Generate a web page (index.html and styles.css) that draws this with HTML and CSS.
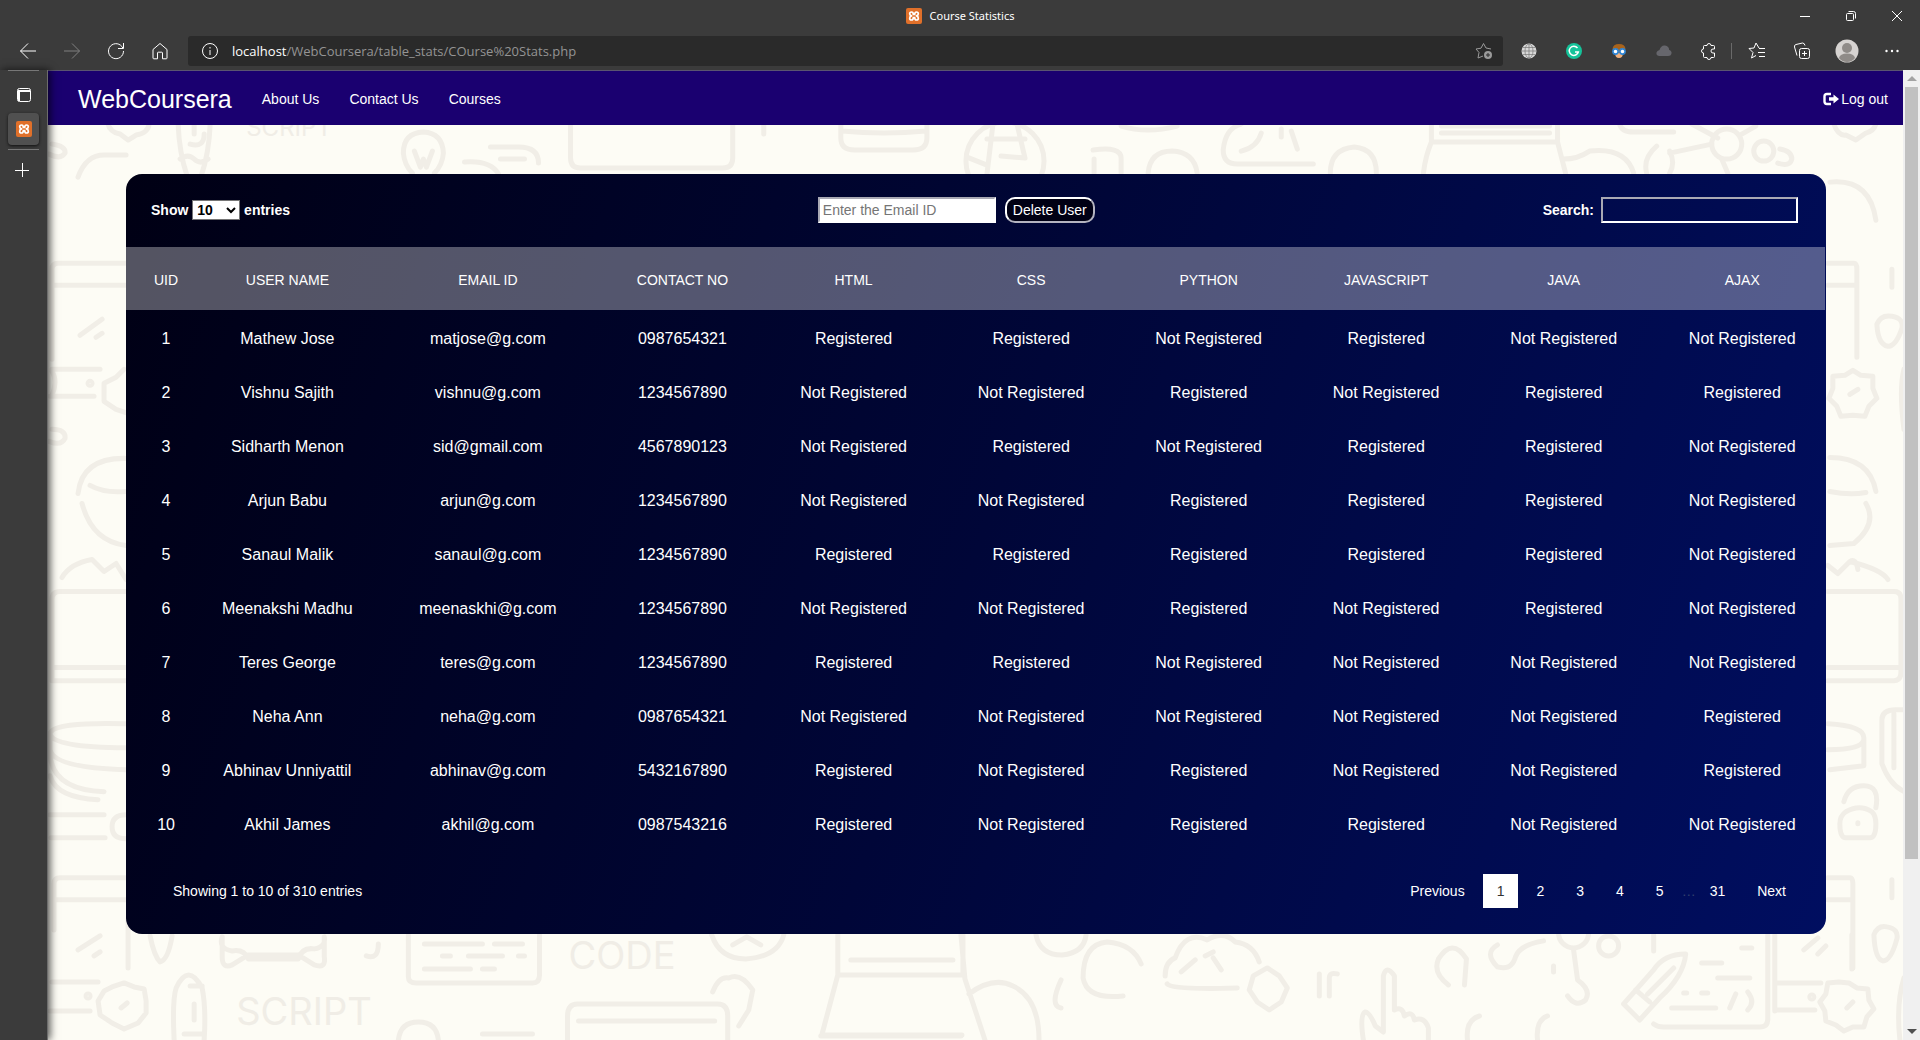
FILE: index.html
```html
<!DOCTYPE html>
<html lang="en">
<head>
<meta charset="utf-8">
<meta name="viewport" content="width=device-width, initial-scale=1">
<title>Course Statistics</title>
<link rel="stylesheet" href="styles.css">
</head>
<body>
<svg class="defs" aria-hidden="true">
  <symbol id="xampp" viewBox="0 0 16 16">
    <rect width="16" height="16" rx="2" fill="#e0702a"/>
    <path d="M5.600 7.900Q3.700 7.600 3.700 5.800 3.700 4 5.500 4 7.300 4 7.300 6.500h1.400Q8.700 4 10.500 4q1.800 0 1.800 1.800 0 1.800-1.900 2.100 1.900.4 1.900 2.300 0 1.800-1.800 1.800-1.800 0-1.800-2.500H7.300q0 2.500-1.800 2.500-1.800 0-1.800-1.800 0-1.900 1.900-2.300Z" fill="none" stroke="#fff" stroke-width="1.700" stroke-linejoin="round"/>
  </symbol>
</svg>

<header class="titlebar">
  <div class="window-title"><svg class="favicon"><use href="#xampp"/></svg><span>Course Statistics</span></div>
  <div class="window-buttons">
    <button aria-label="Minimize"><svg width="12" height="12"><path d="M1 6.500h10"/></svg></button>
    <button aria-label="Restore"><svg width="12" height="12"><rect x="1.500" y="3.500" width="7" height="7" rx="1"/><path d="M3.500 1.500h5q2 0 2 2v5"/></svg></button>
    <button aria-label="Close"><svg width="12" height="12"><path d="M1 1l10 10M11 1L1 11"/></svg></button>
  </div>
</header>

<div class="toolbar">
  <div class="nav-buttons">
    <button aria-label="Back"><svg width="18" height="18"><path d="M17 9H1.500M9 1.500L1.500 9 9 16.500"/></svg></button>
    <button aria-label="Forward" class="is-dim"><svg width="18" height="18"><path d="M1 9h15.500M9 1.500L16.500 9 9 16.500"/></svg></button>
    <button aria-label="Refresh"><svg width="18" height="18"><path d="M15.800 6A7.500 7.500 0 1 0 16.500 9M16.500 1v5.500H11"/></svg></button>
    <button aria-label="Home"><svg width="18" height="18"><path d="M2 7.500L9 1.500l7 6V16q0 .8-.8.8H11.500V11q0-.8-.8-.8H7.300q-.8 0-.8.8v5.800H2.800Q2 16.800 2 16Z"/></svg></button>
  </div>
  <div class="address">
    <svg class="info" width="18" height="18"><circle cx="9" cy="9" r="7.500"/><path d="M9 8v5M9 5v1.500"/></svg>
    <span class="url"><b>localhost</b>/WebCoursera/table_stats/COurse%20Stats.php</span>
    <button aria-label="Add to favorites"><svg width="18" height="18"><path d="M8 14l-5 2 1-5.500L1 7l5-.8L8.500 1.500 11 6l5 1"/><circle cx="13" cy="13" r="4" class="fill"/><path d="M13 11v4M11 13h4" stroke="#2a2a2a"/></svg></button>
  </div>
  <div class="tools">
    <button aria-label="Web extension"><svg width="16" height="16"><circle cx="8" cy="8" r="7.500" fill="#d8d8d8" stroke="none"/><path d="M8 1v14M1 8h14M2 4.500h12M2 11.500h12" stroke="#777" stroke-width=".7"/><ellipse cx="8" cy="8" rx="4" ry="7" stroke="#777" stroke-width=".7"/></svg></button>
    <button aria-label="Grammarly"><svg width="16" height="16"><circle cx="8" cy="8" r="8" fill="#15c39a" stroke="none"/><path d="M11.500 5A4.600 4.600 0 1 0 12.300 9H9" stroke-width="1.500"/></svg></button>
    <button aria-label="Owl extension"><svg width="16" height="16"><path d="M1.500 6Q2 1 8 1t6.500 5L12 10H4Z" fill="#a8631c" stroke="none"/><path d="M4 10h8q0 5-4 5t-4-5Z" fill="#f1b07c" stroke="none"/><circle cx="4.500" cy="8.500" r="2.600" fill="#fff" stroke="#2f86d6" stroke-width="1.600"/><circle cx="11.500" cy="8.500" r="2.600" fill="#fff" stroke="#2f86d6" stroke-width="1.600"/></svg></button>
    <button aria-label="Cloud extension"><svg width="16" height="16"><path d="M3 13q-3-.5-2.500-3.500Q1 7.500 3.500 7 5 2 9 2.500q4 .5 4.200 4.500Q16 8 15.500 10.500 15 13 12 13Z" fill="#66666c" stroke="none"/></svg></button>
    <button aria-label="Extensions"><svg width="18" height="18"><path d="M3.500 4.500q0-1 1-1H7a2 2 0 0 1 4 0h2.500q1 0 1 1V7h-1.500a2 2 0 0 0 0 4h1.500v3.500q0 1-1 1H11a2 2 0 0 1-4 0H4.500q-1 0-1-1V11a2 2 0 0 1 0-4Z"/></svg></button>
    <span class="separator"></span>
    <button aria-label="Favorites"><svg width="18" height="18"><path d="M11 6L8 1 6 6 1 6.500l4 4L3.500 16 8 13.500M11 6.500h6M10 10.500h7M11 14.500h6"/></svg></button>
    <button aria-label="Collections"><svg width="18" height="18"><rect x="6.500" y="6.500" width="10" height="10" rx="2"/><path d="M11.500 9v5M9 11.500h5M4 13.500L1.500 5q-.5-2 1.500-2.500L9.500 1q2 0 2.500 2.500"/></svg></button>
    <button aria-label="Profile"><svg width="24" height="24"><circle cx="12" cy="12" r="11.500" fill="#d6d3d1" stroke="none"/><circle cx="12" cy="9" r="5" fill="#8f8b88" stroke="none"/><path d="M4 19q1-4.500 8-4.500t8 4.500q-3 4-8 4t-8-4Z" fill="#8f8b88" stroke="none"/></svg></button>
    <button aria-label="Settings and more"><svg width="16" height="16"><circle cx="2.500" cy="8" r="1.200" class="fill"/><circle cx="8" cy="8" r="1.200" class="fill"/><circle cx="13.500" cy="8" r="1.200" class="fill"/></svg></button>
  </div>
</div>

<div class="workspace">
  <aside class="tabs">
    <button aria-label="Tab actions"><svg width="16" height="16"><rect x="1.500" y="1.500" width="13" height="13" rx="2"/><path d="M2 4h12M3 3v11" stroke-width="2"/></svg></button>
    <button aria-label="Course Statistics" class="is-active"><svg class="favicon"><use href="#xampp"/></svg></button>
    <hr>
    <button aria-label="New tab"><svg width="16" height="16"><path d="M1 8.500h14M8.500 1v14"/></svg></button>
  </aside>

  <div class="page">
    <svg class="doodles" viewBox="48 71 1855 969" preserveAspectRatio="xMinYMin slice" aria-hidden="true">
      <!-- strip above the card -->
      <path d="M108 125q2 8 12 10l8 6 8-5q12-2 13-11M178 125q1 28 9 52M210 125q-1 28-9 52M194 125v10M180 160q8-6 14 0t14 0M190 145q14 4 14-10"/>
      <text class="small" x="246" y="137">SCRIPT</text>
      <path d="M412 174q-8-8-9-20 0-20 20-21 19 1 20 21-1 12-9 20M414 152l6 16 3-8 3 8 6-16M490 148h28q20 0 20 16M500 160h24M464 163q26-2 34 12M570 125v34q0 10 10 10h142q10 0 10-10v-34M763 125v10"/>
      <path d="M840 125v14q0 12 14 12h58q14 0 14-12v-14M841 132q42 4 84 0"/>
      <circle cx="1004" cy="162" r="39"/>
      <path d="M992 125l-6 50M1016 125l8 34-24-2M986 140h38M966 158l20 8M1092 151q28-4 28 8v15M1093 160v14M1147 174q2-22 24-22 22 1 25 22M1120 127q26 8 56 0M1240 125q-16 4-18 26 0 14 14 14h76M1240 152q16-4 20-18M1280 130v8M1296 150l-6-18M1329 174q0-24 24-26 22 2 22 26"/>
      <path d="M1430 125v18h126v-18M1440 127h108M1440 134h108M1430 143q-6 14-8 31M1556 143l8 31M1562 160q14 0 26-8 36-4 44 22M1618 125q2 8 14 8h40M1690 125l26 14M1740 135l14-8M1668 154l42-9M1655 147q-14 12-10 27M1668 152q6 12 0 22M1720 160l6 14"/>
      <circle cx="1725" cy="145" r="15"/><circle cx="1762" cy="152" r="10"/>
      <path d="M1778 150q12 2 12 10-2 8-14 4M1832 125q4 12 12 11l10 5 10-7q8-2 10-9"/>
      <!-- left margin -->
      <path d="M52 145q14 2 13 9-4 7-16 1M78 178q8-22 26-22h22M126 264H58q-6 0-6 6v90M52 286h74M80 336l22-16M96 338l6-4M52 370h48M50 397h44M52 372q6 10 0 24M124 370l-8 8-12 6 0 18 12 8 12 4M52 430q14 0 13 9-4 8-16 3"/>
      <circle cx="90" cy="384" r="2"/>
      <path d="M78 494q4-36 48-35M82 504q10 38 44 42M90 486q14 8 36 6M62 578q8-14 30-18l12 12 12-8 10 16M52 680V600q0-8 8-8h66M54 668h72M52 681h74M126 724q-74-2-76 10 2 14 76 14M50 736v14q4 18 76 20M50 754q2 36 54 38M50 776q6 22 48 24M50 815h54M51 838h54M126 815q-14 0-14 12t14 12M54 930v-46q0-6 6-6h66M54 900h72M78 950l22-14M94 956l6-4M128 920v48M52 982h46M50 1011h40"/>
      <circle cx="88" cy="996" r="2"/>
      <path d="M124 983l10 4 10 2 2 12 0 12-8 10-14 6-12-6-12-8-2-14 6-10 8-4ZM121 1008l6-5"/>
      <!-- right margin -->
      <path d="M1828 183q40-4 46 38M1826 264h26q3 0 3 6v88M1826 286h29M1890 270v18M1875 325q4-10 15-8 12 2 10 12-6 18-14 18-10-2-11-22ZM1851 371l8 5 12 1 0 12 4 10-8 8-4 10-12-1-12 1-4-10-8-8 4-10 0-12 12-1ZM1848 395l8-5M1902 370q-5 20 0 60M1828 458q40 0 46 34M1828 492q20 4 36 1M1864 504q12 20-12 40l-24 2M1826 566l10 8 12-12q32 8 38 18M1848 562q6-4 8 8"/>
      <path d="M1826 592h66q7 0 7 7v74q0 8-7 8h-66M1826 668h70M1826 724q36 2 36 14v28l-34 4M1826 750q34 0 36-10M1880 720q0-10 14-10h9M1880 720v44q8 22 23 28M1892 714v54"/>
      <path d="M1842 802q4-16 20-16t12 22M1844 812q14-8 26 0 4 4 4 12 0 14-6 14h-24q-6 0-6-14 0-8 6-12ZM1856 823v1M1826 878h22q3 0 3 6v84M1826 900h25M1890 880v18M1872 935q4-10 13-8 12 2 10 12-6 22-14 22-8-2-9-26ZM1847 983l8 5 11 1 1 11 5 9-7 8-3 10-11 0-9 4-8-6-10-4-1-10-5-9 6-8 2-11 11-1ZM1845 1008l6-6M1902 978q-8 26-4 62"/>
      <!-- strip below the card -->
      <path d="M150 936q4 20 10 26 8-2 12-26M222 937q-4 12 10 14 12-2 16 8h50q4-12 16-10 12-2 10-12M222 937v20q0 12 10 8l16-10h50l16 10q12 4 10-8v-20M366 956q12 4 12-12M408 935v42q0 6 8 6h116q7 0 7-8v-40M424 944h58M494 944h28M442 956h8M468 956h34M518 956h6M424 969h46M482 969h12"/>
      <text x="568" y="969">CODE</text><text x="236" y="1025">SCRIPT</text>
      <path d="M711 935q8 24 34 24 32-2 38-24M732 945l14-8 14 8M174 1040q-2-40 2-52 12-26 26 0 4 20 2 52M190 986h12M194 1004v16M184 1034h18M398 1040q2-18 20-18t20 18M482 1034h50M567 1040v-24q0-12 10-12h140q10 0 10 12v24M578 1021h136M712 992q6-16 16-14 12-6 24 12l-4 20-10 16"/>
      <path d="M837 935v40h125v-40M850 960h102M837 975l-16 60h140M820 1036h140M960 935l4 44 20 61M968 994q24-18 44-8 26 12 26 54M1035 935q4 20 26 20 22-2 24-20M1082 978q0-34 24-36 26 2 34 22M1082 978q4 22 40 18M1060 980q-12 26 0 28M1164 976q0-14 10-18 10-28 32-18 16-10 28 2 18 2 24 20M1166 984q4 6 70 4M1180 972l14-12M1204 956l8-4M1220 970l-8-12M1266 968l12 8 8 12-6 14-12 8-12-8-8-12 4-14ZM1318 974v22M1328 996v-18q0-6 8-4"/>
      <path d="M1362 1040q-4-26 2-28 4 0 10 14l8 6v-56q3-12 11 0v34q8-4 10 6 8-6 10 4 10-4 14 8v14M1447 985q-16-12-10-26 14-22 28 0l-2 26M1496 945q-14 8 0 22 14 4 18-10 4-12 28-16"/>
      <circle cx="1572" cy="933" r="15"/><circle cx="1607" cy="946" r="10"/>
      <path d="M1572 950l4 30q14 10 8 20-10 8-18-4M1552 966v6M1652 935v16M1684 954q-22 0-32 16l-30 34 16 16 20-22q24-22 26-44ZM1634 990l14 12M1646 994l26-26M1652 1024q4 3 10 3h96q8 0 8-8v-84M1700 963h20M1716 978h32M1670 1008h44M1740 948h10M1682 993h3M1700 993h6M1728 1008l6-14M1746 1010q8-8 0-18M1773 935v76M1773 983h46M1773 1010h40M1850 935v34M1802 950l14-12M1816 954l8-8M1478 1016q-14 4-12 24M1546 1016q-12 4-10 24"/>
      <circle cx="1810" cy="997" r="2"/>
    </svg>

    <nav class="navbar">
      <a class="brand" href="#">WebCoursera</a>
      <a href="#">About Us</a>
      <a href="#">Contact Us</a>
      <a href="#">Courses</a>
      <a class="logout" href="#"><svg width="16" height="14" viewBox="0 0 16 14"><path d="M8 2H4Q1.500 2 1.500 4.500v5Q1.500 12 4 12h4" fill="none" stroke="#fff" stroke-width="2.400"/><path d="M6 5.300H10.500V2.500L16 7l-5.500 4.500V8.700H6Z" fill="#fff"/></svg>Log out</a>
    </nav>

    <main class="card">
      <div class="controls">
        <label class="length">Show
          <select><option>10</option><option>25</option><option>50</option><option>100</option></select>
          entries</label>
        <form class="delete">
          <input type="text" placeholder="Enter the Email ID" aria-label="Email ID">
          <button type="button">Delete User</button>
        </form>
        <label class="search">Search: <input type="search"></label>
      </div>

      <table>
        <colgroup><col class="c-id"><col class="c-name"><col class="c-mail"><col class="c-phone"><col class="c-course"><col class="c-course"><col class="c-course"><col class="c-course"><col class="c-course"><col></colgroup>
        <thead>
          <tr><th>UID</th><th>USER NAME</th><th>EMAIL ID</th><th>CONTACT NO</th><th>HTML</th><th>CSS</th><th>PYTHON</th><th>JAVASCRIPT</th><th>JAVA</th><th>AJAX</th></tr>
        </thead>
        <tbody>
          <tr><td>1</td><td>Mathew Jose</td><td>matjose@g.com</td><td>0987654321</td><td>Registered</td><td>Registered</td><td>Not Registered</td><td>Registered</td><td>Not Registered</td><td>Not Registered</td></tr>
          <tr><td>2</td><td>Vishnu Sajith</td><td>vishnu@g.com</td><td>1234567890</td><td>Not Registered</td><td>Not Registered</td><td>Registered</td><td>Not Registered</td><td>Registered</td><td>Registered</td></tr>
          <tr><td>3</td><td>Sidharth Menon</td><td>sid@gmail.com</td><td>4567890123</td><td>Not Registered</td><td>Registered</td><td>Not Registered</td><td>Registered</td><td>Registered</td><td>Not Registered</td></tr>
          <tr><td>4</td><td>Arjun Babu</td><td>arjun@g.com</td><td>1234567890</td><td>Not Registered</td><td>Not Registered</td><td>Registered</td><td>Registered</td><td>Registered</td><td>Not Registered</td></tr>
          <tr><td>5</td><td>Sanaul Malik</td><td>sanaul@g.com</td><td>1234567890</td><td>Registered</td><td>Registered</td><td>Registered</td><td>Registered</td><td>Registered</td><td>Not Registered</td></tr>
          <tr><td>6</td><td>Meenakshi Madhu</td><td>meenaskhi@g.com</td><td>1234567890</td><td>Not Registered</td><td>Not Registered</td><td>Registered</td><td>Not Registered</td><td>Registered</td><td>Not Registered</td></tr>
          <tr><td>7</td><td>Teres George</td><td>teres@g.com</td><td>1234567890</td><td>Registered</td><td>Registered</td><td>Not Registered</td><td>Not Registered</td><td>Not Registered</td><td>Not Registered</td></tr>
          <tr><td>8</td><td>Neha Ann</td><td>neha@g.com</td><td>0987654321</td><td>Not Registered</td><td>Not Registered</td><td>Not Registered</td><td>Not Registered</td><td>Not Registered</td><td>Registered</td></tr>
          <tr><td>9</td><td>Abhinav Unniyattil</td><td>abhinav@g.com</td><td>5432167890</td><td>Registered</td><td>Not Registered</td><td>Registered</td><td>Not Registered</td><td>Not Registered</td><td>Registered</td></tr>
          <tr><td>10</td><td>Akhil James</td><td>akhil@g.com</td><td>0987543216</td><td>Registered</td><td>Not Registered</td><td>Registered</td><td>Registered</td><td>Not Registered</td><td>Not Registered</td></tr>
        </tbody>
      </table>

      <div class="card-footer">
        <p>Showing 1 to 10 of 310 entries</p>
        <div class="pager">
          <a href="#">Previous</a>
          <a href="#" class="is-current" aria-current="page">1</a>
          <a href="#">2</a>
          <a href="#">3</a>
          <a href="#">4</a>
          <a href="#">5</a>
          <span>…</span>
          <a href="#">31</a>
          <a href="#">Next</a>
        </div>
      </div>
    </main>
  </div>

  <div class="scrollbar" aria-hidden="true">
    <svg width="17" height="17"><path d="M4 11l5-5 5 5Z" fill="#a3a3a3"/></svg>
    <div class="thumb"></div>
    <div class="track"></div>
    <svg width="17" height="17"><path d="M4 6l5 5 5-5Z" fill="#505050"/></svg>
  </div>
</div>
</body>
</html>
```
FILE: styles.css
```css
* { box-sizing: border-box; }

body {
  margin: 0;
  height: 100vh;
  display: flex;
  flex-direction: column;
  overflow: hidden;
  background: #3b3b3b;
  color: #fff;
  font: 14px/20px "Liberation Sans", Arial, sans-serif;
}

a { color: inherit; text-decoration: none; }
.defs { display: none; }
.favicon { width: 16px; height: 16px; }

/* browser window */
.titlebar button,
.toolbar button,
.tabs button {
  display: flex;
  align-items: center;
  justify-content: center;
  padding: 0;
  border: 0;
  background: none;
  color: #fff;
}

.titlebar svg, .toolbar svg, .tabs svg {
  fill: none;
  stroke: currentColor;
}

.titlebar .favicon, .tabs .favicon { stroke: none; }
.toolbar svg .fill { fill: currentColor; stroke: none; }

.titlebar {
  flex: none;
  height: 36px;
  display: grid;
  grid-template-columns: 1fr auto 1fr;
  align-items: start;
}

.window-title {
  grid-column: 2;
  display: flex;
  align-items: center;
  gap: 8px;
  height: 32px;
  font: 11px/16px "Noto Sans", "Open Sans", sans-serif;
}

.window-buttons { display: flex; justify-content: flex-end; }
.window-buttons button { width: 46px; height: 32px; }

.toolbar { flex: none; height: 34px; display: flex; }
.toolbar button { height: 30px; }
.nav-buttons { display: flex; padding: 0 6px; }
.nav-buttons button { width: 44px; }
.toolbar .is-dim { color: #808080; }

.address {
  flex: 1;
  height: 30px;
  display: flex;
  align-items: center;
  gap: 13px;
  padding: 0 10px 0 13px;
  border-radius: 3px;
  background: #2a2a2a;
}

.url { flex: 1; color: #949494; font: 13px/20px "Open Sans", sans-serif; }
.url b { color: #fff; font-weight: 400; }
.address button { color: #9a9a9a; }

.tools { display: flex; padding: 0 6px 0 3px; }
.tools button { width: 45px; }
.separator { width: 1px; height: 16px; margin: 7px 2px 0 0; background: #6a6a6a; }

.workspace { flex: 1; min-height: 0; display: flex; }

.tabs {
  position: relative;
  z-index: 1;
  flex: none;
  width: 48px;
  padding: 0 8px;
  border-right: 1px solid #6d6d6d;
  background: #3b3b3b;
  box-shadow: 2px 0 8px rgba(0, 0, 0, .7);
}

.tabs::before { content: ""; display: block; height: 1px; background: #777; }
.tabs button { width: 31px; height: 32px; margin-top: 8px; }
.tabs .is-active { margin-top: 2px; border-radius: 4px; background: #505050; box-shadow: 0 1px 3px #111; }
.tabs hr { height: 1px; margin: 4px 0 0; border: 0; background: #777; }
.tabs hr + button { width: 28px; margin-top: 4px; }

.scrollbar {
  flex: none;
  width: 17px;
  display: flex;
  flex-direction: column;
  background: #f0f0f0;
}

.scrollbar svg { flex: none; }
.thumb { flex: 33; margin: 0 2px; background: #c1c1c1; }
.track { flex: 7; }

/* web page */
.page {
  position: relative;
  flex: 1;
  min-width: 0;
  overflow: hidden;
  background: #fdfcf5;
}

.doodles {
  position: absolute;
  inset: 0;
  width: 100%;
  height: 100%;
  fill: none;
  stroke: #f1eee7;
  stroke-width: 5px;
  stroke-linecap: round;
  stroke-linejoin: round;
}

.doodles text {
  fill: #f0ede6;
  stroke: none;
  font: 38px Inter, "Liberation Sans", sans-serif;
}

.doodles .small { font-size: 24px; }

.navbar {
  position: relative;
  display: flex;
  align-items: center;
  gap: 30px;
  min-height: 55px;
  padding: 2px 15px 0 30px;
  border-top: 1px solid #5a5470;
  background: #1a0070;
}

.brand { font-size: 25px; line-height: 28px; }
.logout { margin-left: auto; display: flex; align-items: center; gap: 2px; }

.card {
  position: relative;
  margin: 49px 77px 0 78px;
  padding-bottom: 26px;
  border-radius: 16px;
  background: linear-gradient(110deg, #000014, #000638 50%, #000e60);
}

.controls {
  display: grid;
  grid-template-columns: 649px auto 1fr;
  align-items: center;
  height: 73px;
  padding: 0 28px 2px 25px;
}

.controls { grid-template-columns: 40% auto 1fr; }

.length, .search { font-weight: 700; }

.controls select {
  width: 48px;
  height: 20px;
  border: 1px solid #767676;
  background: #fff;
  color: #000;
  font: 700 14px/16px "Liberation Sans", Arial, sans-serif;
}

.delete { display: flex; gap: 9px; padding-left: 8px; }

.controls input {
  height: 26px;
  padding: 1px 3px;
  border: 2px solid;
  border-color: #a9a9b4 #fff #fff #a9a9b4;
  font: 14px/20px "Liberation Sans", Arial, sans-serif;
}

.delete input { width: 178px; background: #fff; color: #000; }
.delete input::placeholder { color: #757575; }

.delete button {
  width: 90px;
  height: 26px;
  padding: 0;
  border: 2px solid;
  border-color: #fff #b4b4c0 #b4b4c0 #fff;
  border-radius: 10px;
  background: #000014;
  color: #fff;
  font: 14px/20px "Liberation Sans", Arial, sans-serif;
}

.search { display: flex; align-items: center; justify-content: flex-end; gap: 7px; }
.search input { width: 197px; background: transparent; color: #fff; appearance: none; }

table {
  width: calc(100% - 1px);
  table-layout: fixed;
  border-collapse: collapse;
}

.c-id { width: 4.3%; }
.c-name { width: 10.4%; }
.c-mail { width: 13.2%; }
.c-phone { width: 9.7%; }
.c-course { width: 10.45%; }

thead { background: rgba(255, 255, 255, .33); }
th { height: 63px; padding: 3px 0 0; font-weight: 400; }
td { height: 54px; padding: 3px 0 0; font-size: 16px; text-align: center; }
th:first-child, td:first-child,
th:last-child, td:last-child { padding-left: 7px; }

.card-footer {
  display: flex;
  align-items: center;
  justify-content: space-between;
  padding: 24px 26px 0 47px;
}

.card-footer p { margin: 0; }
.pager { display: flex; gap: 4px; line-height: 34px; }
.pager a { padding: 0 14px; }
.pager .is-current { background: #fff; color: #333; }
.pager span { width: 10px; color: #33406e; text-align: center; }
```
